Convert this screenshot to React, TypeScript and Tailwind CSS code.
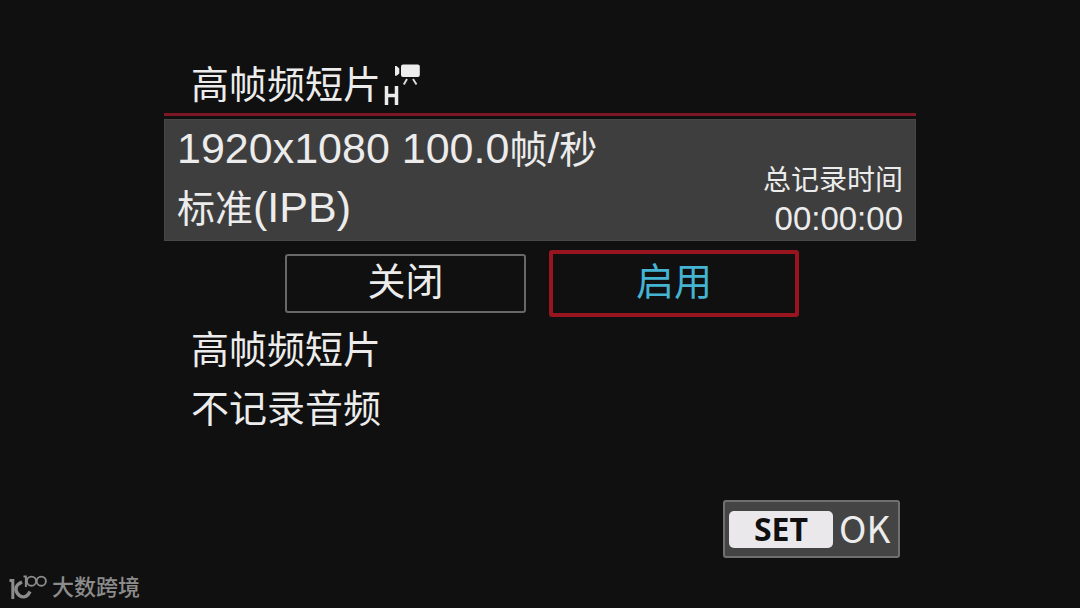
import { useState } from "react";

function MovieModeIcon() {
  return (
    <svg viewBox="0 0 42 44" className="h-[44px] w-[42px]" role="img" aria-label="H">
      <g fill="#ececec">
        <path d="M14 3h1.500l2.800 2.400v5l-2.800 2.300H14z" />
        <rect x="20" y="1.500" width="18.800" height="12.500" rx="2" />
      </g>
      <path d="M26 16l-3.200 5.500M32 16l3.500 5.500" stroke="#d8d8d8" strokeWidth="2" fill="none" />
      <path d="M5.500 23v19M15.500 23v19M5.500 32.500h10" stroke="#ececec" strokeWidth="3.500" fill="none" />
    </svg>
  );
}

function BrandMark() {
  return (
    <svg viewBox="0 0 40 28" className="h-[28px] w-[40px]" aria-hidden="true">
      <g fill="none" stroke="#8c8c8c">
        <path d="M1.500 6.500H4.800V25" strokeWidth="3" />
        <path d="M14 8C7.500 11 6.500 15.500 9.500 19.500C13 24.500 19 24 22 17.500" strokeWidth="3.400" />
        <path d="M15.500 2.500h2.400V13" strokeWidth="2" />
        <circle cx="23.500" cy="7.200" r="4.600" strokeWidth="1.900" />
        <circle cx="33.300" cy="7.200" r="4.600" strokeWidth="1.900" />
      </g>
    </svg>
  );
}

export default function App() {
  const [enabled, setEnabled] = useState(true);
  const option = "flex items-center justify-center rounded-[3px] pb-1 text-[38px] leading-none";
  const on = "h-[67px] w-[250px] border-4 border-[#98141f] text-[#45b4d2]";
  const off = "mx-1 h-[59px] w-[241px] border-2 border-[#686868] text-[#ececec]";

  return (
    <div className="relative min-h-screen bg-[#101010] font-['Liberation_Sans','Noto_Sans_CJK_SC',sans-serif] text-[#ececec]">
      <main className="mx-auto flex w-full max-w-[752px] flex-col pt-14">
        <header className="flex h-[60px] items-center border-b-3 border-[#7d1625] pl-[27px]">
          <h1 className="text-[38px] leading-[56px]">高帧频短片</h1>
          <MovieModeIcon />
        </header>

        <section className="mt-[3px] flex h-[122px] items-center justify-between border border-[#484848] bg-[#3e3e3e] px-3">
          <div className="text-[38px] leading-[59px]">
            <p>
              <span className="text-[43px] leading-none">1920x1080 100.0</span>帧<span className="text-[43px] leading-none">/</span>秒
            </p>
            <p>
              标准<span className="text-[43px] leading-none">(IPB)</span>
            </p>
          </div>
          <div className="pt-10 text-right text-[28px] leading-[38px]">
            <p>总记录时间</p>
            <p className="text-[33px]">00:00:00</p>
          </div>
        </section>

        <div className="mt-[9px] flex h-[67px] items-center justify-center gap-[19px]" role="group" aria-label="高帧频短片">
          <button type="button" aria-pressed={!enabled} onClick={() => setEnabled(false)} className={`${option} ${enabled ? off : on}`}>
            关闭
          </button>
          <button type="button" aria-pressed={enabled} onClick={() => setEnabled(true)} className={`${option} ${enabled ? on : off}`}>
            启用
          </button>
        </div>

        <p className="mt-1 pl-[27px] text-[38px] leading-[59px]">
          高帧频短片
          <br />
          不记录音频
        </p>

        <button type="button" className="mt-[61px] mr-4 flex h-[58px] w-[177px] items-center gap-1.5 self-end rounded-[3px] border-2 border-[#707070] bg-[#444444] pl-1">
          <span className="flex h-[37px] w-[104px] items-center justify-center rounded-[5px] bg-[#ebe8ec] font-['Open_Sans',sans-serif] text-[32px] leading-none font-bold text-[#101010]">
            SET
          </span>
          <span className="pb-1 font-['Noto_Sans_CJK_SC',sans-serif] text-[37px] leading-none">OK</span>
        </button>
      </main>

      <div className="absolute bottom-1.5 left-2 flex items-center gap-1 text-[#8c8c8c]">
        <BrandMark />
        <span className="text-[22px] leading-7 font-medium">大数跨境</span>
      </div>
    </div>
  );
}
